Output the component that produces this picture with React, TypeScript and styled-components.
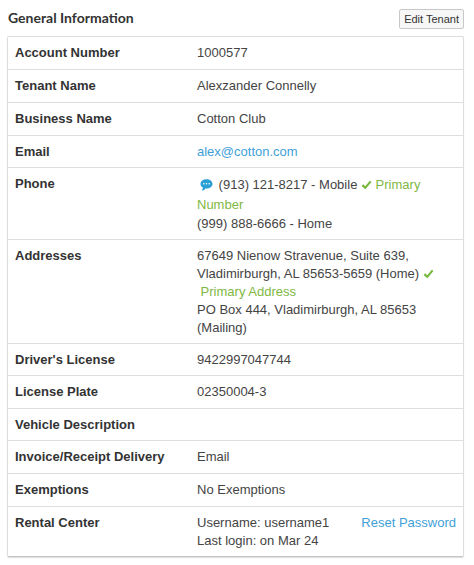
import React from "react";
import styled, { createGlobalStyle } from "styled-components";

const GlobalStyle = createGlobalStyle`
  * { box-sizing: border-box; }
  body {
    margin: 0;
    background: #fff;
    color: #444;
    font: 13px/18px "Liberation Sans", Arial, sans-serif;
  }
`;

const Section = styled.section`
  padding: 9px 10px 8px 7px;
`;

const Header = styled.header`
  display: flex;
  justify-content: space-between;
  align-items: flex-start;
  margin-bottom: 7px;
`;

const Title = styled.h2`
  margin: 0;
  padding-left: 1px;
  color: #333;
  font: 700 14px/18px Lato, "Liberation Sans", sans-serif;
`;

const EditButton = styled.button`
  height: 20px;
  margin: 0;
  padding: 0 4px;
  border: 1px solid #c8c8c8;
  border-radius: 2px;
  background: #f7f7f7;
  color: #333;
  font: 11px/16px "Liberation Sans", Arial, sans-serif;
  cursor: pointer;
`;

const Card = styled.div`
  border: 1px solid #ddd;
  border-bottom-color: #c4c4c4;
  border-radius: 2px;
  box-shadow: 0 1px 1px #ddd;
`;

const Table = styled.table`
  width: 100%;
  border-collapse: separate;
  border-spacing: 0;
`;

const Row = styled.tr<{ $tight?: boolean }>`
  th,
  td {
    padding: 7px 7px ${(p) => (p.$tight ? 6 : 7)}px;
    border-bottom: 1px solid #ddd;
    vertical-align: top;
    text-align: left;
  }
  &:last-child th,
  &:last-child td {
    border-bottom: 0;
  }
`;

const Label = styled.th`
  width: 40%;
  color: #333;
  font-weight: 700;
`;

const Value = styled.td``;

const Link = styled.a`
  color: #3f9fd8;
  text-decoration: none;
`;

const Primary = styled.span`
  color: #7fb844;
`;

const Split = styled.div`
  display: flex;
  justify-content: space-between;
`;

const BubbleIcon = styled.svg`
  width: 13px;
  height: 12px;
  margin: 0 2px 0 3px;
  vertical-align: -2px;
`;

const CheckIcon = styled.svg`
  width: 11px;
  height: 10px;
  vertical-align: -1px;
`;

const PhoneLine = styled.div<{ $tall?: boolean }>`
  line-height: ${(p) => (p.$tall ? 20 : 18)}px;
`;

const Bubble = () => (
  <BubbleIcon viewBox="0 0 13 12" role="img" aria-label="Text messages">
    <path
      d="M6.500.3C3.200.3.500 2.300.500 4.900c0 1.600 1 2.900 2.500 3.700-.1 1.100-.5 2.100-1.200 3 1.700-.3 3-1.100 3.800-2.200h.9c3.300 0 6-1.900 6-4.500S9.800.3 6.500.3Z"
      fill="#2a9fd6"
    />
    <circle cx="3.800" cy="4.800" r=".8" fill="#fff" />
    <circle cx="6.500" cy="4.800" r=".8" fill="#fff" />
    <circle cx="9.200" cy="4.800" r=".8" fill="#fff" />
  </BubbleIcon>
);

const Check = () => (
  <CheckIcon viewBox="0 0 11 10" aria-hidden="true">
    <path d="M.6 5.900 2.300 4.300 4.200 6.200 8.900.8 10.400 1.900 4.400 9.300Z" fill="#74b739" />
  </CheckIcon>
);

export default function App() {
  return (
    <>
      <GlobalStyle />
      <Section>
        <Header>
          <Title>General Information</Title>
          <EditButton type="button">Edit Tenant</EditButton>
        </Header>
        <Card>
          <Table>
            <tbody>
              <Row>
                <Label scope="row">Account Number</Label>
                <Value>1000577</Value>
              </Row>
              <Row>
                <Label scope="row">Tenant Name</Label>
                <Value>Alexzander Connelly</Value>
              </Row>
              <Row>
                <Label scope="row">Business Name</Label>
                <Value>Cotton Club</Value>
              </Row>
              <Row $tight>
                <Label scope="row">Email</Label>
                <Value>
                  <Link href="mailto:alex@cotton.com">alex@cotton.com</Link>
                </Value>
              </Row>
              <Row $tight>
                <Label scope="row">Phone</Label>
                <Value>
                  <PhoneLine $tall>
                    <Bubble /> (913) 121-8217 - Mobile <Check />{" "}
                    <Primary>
                      Primary
                      <br />
                      Number
                    </Primary>
                  </PhoneLine>
                  <PhoneLine>(999) 888-6666 - Home</PhoneLine>
                </Value>
              </Row>
              <Row $tight>
                <Label scope="row">Addresses</Label>
                <Value>
                  67649 Nienow Stravenue, Suite 639,
                  <br />
                  Vladimirburgh, AL 85653-5659 (Home) <Check />
                  <br />
                  <Primary>&nbsp;Primary Address</Primary>
                  <br />
                  PO Box 444, Vladimirburgh, AL 85653
                  <br />
                  (Mailing)
                </Value>
              </Row>
              <Row $tight>
                <Label scope="row">Driver's License</Label>
                <Value>9422997047744</Value>
              </Row>
              <Row>
                <Label scope="row">License Plate</Label>
                <Value>02350004-3</Value>
              </Row>
              <Row $tight>
                <Label scope="row">Vehicle Description</Label>
                <Value />
              </Row>
              <Row>
                <Label scope="row">Invoice/Receipt Delivery</Label>
                <Value>Email</Value>
              </Row>
              <Row>
                <Label scope="row">Exemptions</Label>
                <Value>No Exemptions</Value>
              </Row>
              <Row $tight>
                <Label scope="row">Rental Center</Label>
                <Value>
                  <Split>
                    <span>
                      Username: username1
                      <br />
                      Last login: on Mar 24
                    </span>
                    <Link href="#reset-password">Reset Password</Link>
                  </Split>
                </Value>
              </Row>
            </tbody>
          </Table>
        </Card>
      </Section>
    </>
  );
}
